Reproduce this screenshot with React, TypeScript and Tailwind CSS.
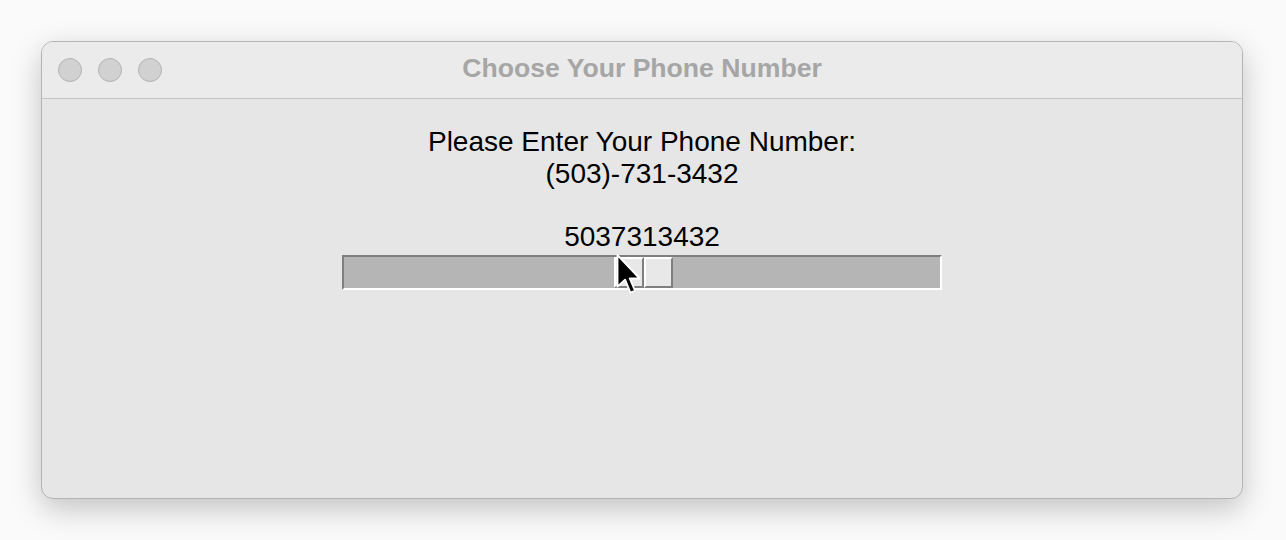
export default function App() {
  const lights = [0, 1, 2];
  return (
    <div className="h-[540px] w-[1286px] bg-[#fafafa] pt-[41px] pl-[41px] font-['Liberation_Sans',Arial,sans-serif]">
      <div className="flex h-[458px] w-[1202px] flex-col overflow-hidden rounded-[12px] border border-[#b4b4b4] bg-[#e6e6e6] shadow-[0_10px_30px_rgba(0,0,0,0.22)]">
        <div className="relative flex h-[57px] shrink-0 items-center justify-center border-b border-[#c4c4c4] bg-[#ebebeb] pb-[2px]">
          <div className="absolute left-[16px] top-[16px] flex gap-[16px]">
            {lights.map((i) => (
              <div key={i} className="h-[24px] w-[24px] rounded-full border border-[#b3b3b3] bg-[#d1d1d1]" />
            ))}
          </div>
          <span className="text-[26.6px] font-bold text-[#a6a6a6]">Choose Your Phone Number</span>
        </div>

        <div className="flex flex-col items-center pt-[27px] text-[28px] leading-[32px] text-black">
          <div className="text-center">
            Please Enter Your Phone Number:
            <br />
            (503)-731-3432
          </div>
          <div className="mt-[31px]">5037313432</div>
          <div className="relative mt-[2px] flex h-[35px] w-[600px] border-2 border-t-[#7f7f7f] border-l-[#7f7f7f] border-r-white border-b-white bg-[#b5b5b5]">
            <div className="ml-[270px] flex h-full">
              <div className="h-full w-[30px] border-2 border-t-white border-l-white border-r-[#7f7f7f] border-b-[#7f7f7f] bg-[#e8e8e8]" />
              <div className="h-full w-[29px] border-2 border-t-white border-l-white border-r-[#7f7f7f] border-b-[#7f7f7f] bg-[#e8e8e8]" />
            </div>
            <svg className="absolute left-[270px] top-[-3px]" width="28" height="42" viewBox="0 0 22 36">
              <path d="M2 1 L2 28 L8.5 22 L13 33 L17 31.5 L12.5 21 L21 21 Z" fill="#000" stroke="#fff" strokeWidth="1.6" strokeLinejoin="round" />
            </svg>
          </div>
        </div>
      </div>
    </div>
  );
}
